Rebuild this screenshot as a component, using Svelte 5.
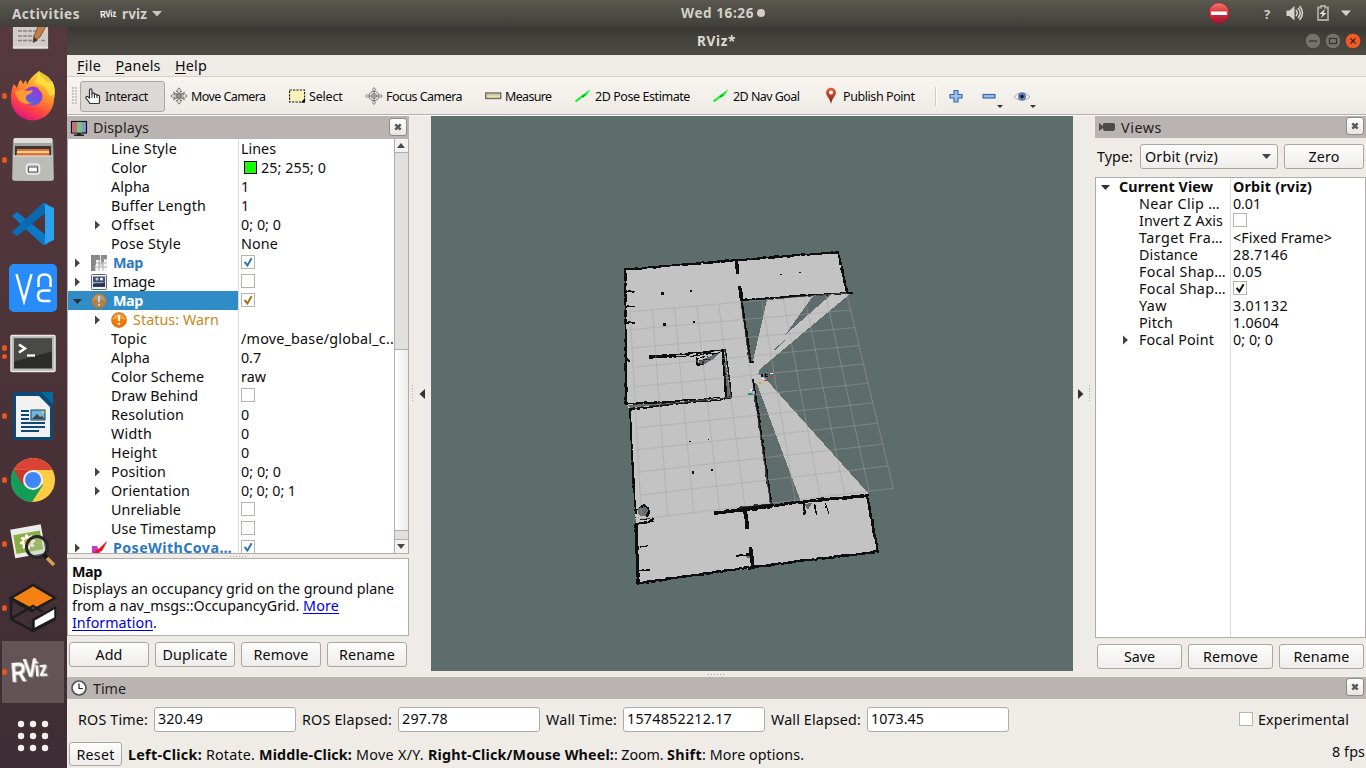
<script>
  // Adjusts tracking so that a label fills its measured column width.
  function fit(node, w) {
    if (!w) return;
    const natural = node.getBoundingClientRect().width;
    const n = [...node.textContent].length;
    node.style.letterSpacing = ((w - natural) / n).toFixed(3) + 'px';
  }

  const dock = [
    { id: 'edit', dots: 0 }, { id: 'firefox', dots: 1 }, { id: 'files', dots: 1 }, { id: 'code', dots: 0 },
    { id: 'vnc', dots: 0 }, { id: 'term', dots: 2 }, { id: 'writer', dots: 1 }, { id: 'chrome', dots: 1 },
    { id: 'viewer', dots: 1 }, { id: 'gazebo', dots: 1 }, { id: 'rviz', dots: 1 }, { id: 'apps', dots: 0 }
  ];

  const tools = [
    { id: 'hand', label: 'Interact', box: 85, w: 43, on: true },
    { id: 'move', label: 'Move Camera', box: 118, w: 74.5 },
    { id: 'select', label: 'Select', box: 77, w: 33.5 },
    { id: 'focus', label: 'Focus Camera', box: 119, w: 76 },
    { id: 'measure', label: 'Measure', box: 90, w: 46.5 },
    { id: 'arrow', label: '2D Pose Estimate', box: 138, w: 95 },
    { id: 'arrow', label: '2D Nav Goal', box: 110, w: 66.5 },
    { id: 'pin', label: 'Publish Point', box: 109, w: 71.5 }
  ];

  // k: label, w: label width, v: value, vw: value width, d: depth
  const rows = [
    { k: 'Line Style', w: 66, v: 'Lines', vw: 35, d: 2 },
    { k: 'Color', w: 36, v: '25; 255; 0', vw: 65, d: 2, swatch: true },
    { k: 'Alpha', w: 39, v: '1', d: 2 },
    { k: 'Buffer Length', w: 95, v: '1', d: 2 },
    { k: 'Offset', w: 44, v: '0; 0; 0', vw: 40, d: 2, tri: 'r' },
    { k: 'Pose Style', w: 70, v: 'None', vw: 37, d: 2 },
    { k: 'Map', w: 30, d: 1, tri: 'r', icon: 'map', style: 'blue', check: '#2a76bd' },
    { k: 'Image', w: 42, d: 1, tri: 'r', icon: 'image', check: 'none' },
    { k: 'Map', w: 30, d: 1, tri: 'd', icon: 'warn', style: 'sel', check: '#a8720a' },
    { k: 'Status: Warn', w: 86, d: 2, tri: 'r', icon: 'warn', style: 'warnrow' },
    { k: 'Topic', w: 36, v: '/move_base/global_c..', vw: 153, d: 2 },
    { k: 'Alpha', w: 39, v: '0.7', vw: 20, d: 2 },
    { k: 'Color Scheme', w: 93, v: 'raw', vw: 25, d: 2 },
    { k: 'Draw Behind', w: 87, d: 2, check: 'none' },
    { k: 'Resolution', w: 73, v: '0', d: 2 },
    { k: 'Width', w: 41, v: '0', d: 2 },
    { k: 'Height', w: 46, v: '0', d: 2 },
    { k: 'Position', w: 55, v: '0; 0; 0', vw: 40, d: 2, tri: 'r' },
    { k: 'Orientation', w: 79, v: '0; 0; 0; 1', vw: 55, d: 2, tri: 'r' },
    { k: 'Unreliable', w: 70, d: 2, check: 'none' },
    { k: 'Use Timestamp', w: 105, d: 2, check: 'none' },
    { k: 'PoseWithCova…', w: 119, d: 1, tri: 'r', icon: 'pose', style: 'blue', check: '#2a76bd' }
  ];

  const views = [
    { k: 'Current View', w: 94, v: 'Orbit (rviz)', vw: 79, top: true, tri: 'd' },
    { k: 'Near Clip …', w: 81, v: '0.01', vw: 28 },
    { k: 'Invert Z Axis', w: 84, check: 'none' },
    { k: 'Target Fra…', w: 84, v: '<Fixed Frame>', vw: 99 },
    { k: 'Distance', w: 59, v: '28.7146', vw: 55 },
    { k: 'Focal Shap…', w: 87, v: '0.05', vw: 29 },
    { k: 'Focal Shap…', w: 87, check: '#111' },
    { k: 'Yaw', w: 28, v: '3.01132', vw: 55 },
    { k: 'Pitch', w: 34, v: '1.0604', vw: 46 },
    { k: 'Focal Point', w: 75, v: '0; 0; 0', vw: 40, tri: 'r' }
  ];

  const times = [
    { k: 'ROS Time:', w: 70, v: '320.49', vw: 45 },
    { k: 'ROS Elapsed:', w: 90, v: '297.78', vw: 46 },
    { k: 'Wall Time:', w: 71, v: '1574852212.17', vw: 105 },
    { k: 'Wall Elapsed:', w: 90, v: '1073.45', vw: 53 }
  ];

  // Occupied cells: each wall is [thickness, x, y, x, y, ...]
  let seed = 7;
  const rnd = () => ((seed = (seed * 16807) % 2147483647) / 2147483647);
  const walls = [
    [1.8, 625, 269.5, 736, 260, 838, 252, 847, 292], [1.6, 851, 292.5, 741.7, 300.3], [1, 845, 293, 780, 297],
    [3, 739.5, 287, 741.7, 300.3], [2, 741.7, 300.3, 750, 361.7, 752.5, 361.7], [3, 736.5, 260, 737, 272],
    [1.8, 625, 269.5, 625.7, 323, 626, 404], [1.6, 626, 404, 680, 401], [1, 680, 400.5, 731.5, 397.3],
    [1.6, 629.5, 409.3, 655, 406, 700, 400.5], [1, 700, 400.5, 731, 397.5], [1, 700, 402, 730, 398.5],
    [1.6, 722.5, 351, 726, 397], [1.4, 725.5, 350, 731.5, 397], [2.6, 650, 357, 675, 356], [1.4, 675, 355, 725, 350], [1, 676, 357, 720, 353],
    [1.6, 630, 409, 632, 458, 635.5, 511], [2.6, 636, 525, 638, 583], [1.6, 636, 524, 653, 521], [1, 640, 519, 653, 519], [1, 653, 518, 653, 521],
    [2, 638, 583, 700, 574.5, 753, 567, 800, 561, 878, 551.5], [2, 866.7, 495, 878, 551.5], [1.6, 636, 523, 637.7, 583],
    [3, 715, 513, 771.5, 506], [2, 740, 508, 771.5, 504.5], [2, 771, 505.5, 800, 502.5, 867.7, 495.5], [1, 800, 501, 867, 494.5],
    [2, 753, 380, 771, 504], [3, 744.5, 509, 747.7, 527], [3, 750.7, 548.5, 752.5, 567], [1.6, 736, 555.3, 750, 554.7],
    [2, 803.5, 503, 804.5, 514], [1.4, 814.3, 504, 816.5, 514], [1, 825, 503, 828.7, 513],
    [1, 626, 291.5, 634, 291.5], [1, 626, 307, 634, 306.5], [1, 626, 323, 634, 322], [2, 626.5, 359, 629, 361],
    [1, 640, 547, 648, 546], [1, 639, 570.5, 649, 569.5],
    [1.6, 696.5, 358, 697.5, 365, 703, 365, 703, 362], [0.8, 697, 358, 707, 356], [0.8, 699, 361, 711, 359],
    [1.4, 640, 507, 644, 505.5, 648, 508, 649, 512, 647, 516], [1, 637, 509, 636, 513]
  ];
  const dots = [[662.7, 293, 3], [690.7, 291.3, 2], [664.3, 324.7, 2.5], [694, 322.3, 2], [781, 274.3, 1.5], [800, 272.3, 1.5],
    [690, 441.7, 1.5], [708.3, 439.3, 1], [693, 472.3, 2.5], [711.7, 470, 1.5], [788, 317, 0.8], [790, 314, 0.8], [635, 517, 1]];
  const cell = (x, y, s) => `M${x.toFixed(1)} ${y.toFixed(1)}h${s}v${s}h${-s}z`;
  let cells = '';
  for (const [t, ...p] of walls) {
    for (let i = 0; i + 3 < p.length; i += 2) {
      const [x0, y0, x1, y1] = p.slice(i, i + 4);
      const n = Math.ceil(Math.hypot(x1 - x0, y1 - y0) / 0.9);
      let j = 0;
      for (let q = 0; q <= n; q++) {
        if (q % 4 === 0) j = (rnd() - 0.5) * 1.1;
        const s = +(t + (rnd() < 0.12 ? 1 : 0)).toFixed(1);
        cells += cell(x0 + ((x1 - x0) * q) / n - s / 2 + j * 0.6, y0 + ((y1 - y0) * q) / n - s / 2 + j, s);
      }
    }
  }
  for (const [x, y, s] of dots) cells += cell(x - s / 2, y - s / 2, s);

  // Ground plane grid: ten by ten cells seen in perspective
  const A = [630, 311.7], B = [846.5, 293], C = [893.3, 488.3], D = [641.5, 519];
  const sx = A[0] - B[0] + C[0] - D[0], sy = A[1] - B[1] + C[1] - D[1];
  const dx1 = B[0] - C[0], dx2 = D[0] - C[0], dy1 = B[1] - C[1], dy2 = D[1] - C[1];
  const det = dx1 * dy2 - dx2 * dy1;
  const g = (sx * dy2 - dx2 * sy) / det, h = (dx1 * sy - sx * dy1) / det;
  const proj = (u, v) => {
    const z = g * u + h * v + 1;
    return [0, 1].map((i) => (((B[i] - A[i] + g * B[i]) * u + (D[i] - A[i] + h * D[i]) * v + A[i]) / z).toFixed(1)).join(' ');
  };
  let grid = '';
  for (let i = 0; i <= 10; i++) grid += `M${proj(i / 10, 0)}L${proj(i / 10, 1)}M${proj(0, i / 10)}L${proj(1, i / 10)}`;
</script>

{#snippet t(s, w)}<span class="t" use:fit={w}>{s}</span>{/snippet}

{#snippet tri(dir)}
  <svg class="tri" width="10" height="10" viewBox="0 0 10 10">
    {#if dir === 'r'}<path d="M2 .5v9l5-4.5z" fill="#454545" />{:else}<path d="M0 3h9L4.500 8z" fill="#303030" />{/if}
  </svg>
{/snippet}

{#snippet check(c)}
  <span class="check">{#if c !== 'none'}<svg width="12" height="12" viewBox="0 0 12 12"><path d="M2.6 5.8l2.8 3.6L9.6 2.2" fill="none" stroke={c} stroke-width="2" /></svg>{/if}</span>
{/snippet}

{#snippet close()}
  <span class="close"><svg width="10" height="10" viewBox="0 0 10 10"><path d="M2.3 2.3l5.4 5.4M7.7 2.3L2.3 7.7" stroke="#5a5a5a" stroke-width="2.5" /></svg></span>
{/snippet}

{#snippet rowIcon(id)}
  <svg width="16" height="16" viewBox="0 0 16 16">
    {#if id === 'map'}
      <path d="M0 0h16v16H0z" fill="#f4f4f4" /><path d="M0 0h9v5H5v5H4v6H0z" fill="#858585" /><path d="M10 0h6v4h-3v3h-3z" fill="#8b8b8b" /><path d="M8 7h4v4H8z" fill="#d5d5d5" />
      <path d="M0 4h16M0 8h16M0 12h16M4 0v16M8 0v16M12 0v16" stroke="#999" stroke-width=".7" />
    {:else if id === 'image'}
      <rect x=".5" y=".5" width="15" height="15" rx="1" fill="#f2f2f2" stroke="#666" /><rect x="2" y="2.500" width="12" height="10.500" fill="#3c4e7c" /><path d="M2 8h12v3H2z" fill="#8ba1c5" /><path d="M2 10c4-2 7 1 12-2v4.500H2z" fill="#283447" /><circle cx="10.500" cy="5" r="1.500" fill="#fff" /><circle cx="6" cy="5" r="1.500" fill="#c8cfb0" />
    {:else if id === 'warn'}
      <circle cx="8" cy="8" r="7.300" fill="#f57900" stroke="#dc6800" stroke-width="1" /><path d="M1.500 8a6.500 6.500 0 0 1 13 0c-4-2-8-2-13 0z" fill="#ffad55" opacity=".7" /><path d="M8 3v6" stroke="#fff" stroke-width="2.200" /><circle cx="8" cy="11.700" r="1.200" fill="#fff" />
    {:else}
      <path d="M1 6h5l3 6v4H1z" fill="#c73ac4" /><path d="M6 11L15.500 2 10.500 11z" fill="#f01010" stroke="#f01010" stroke-width=".8" /><path d="M1 16l7-6" stroke="#f01010" stroke-width="2.600" />
    {/if}
  </svg>
{/snippet}

{#snippet toolIcon(id)}
  <svg width="18" height="18" viewBox="0 0 18 18">
    {#if id === 'hand'}
      <path d="M5.500 11V3a1.200 1.200 0 0 1 2.400 0v5-1.500q1.300-1.200 2.500 0v1q1.300-1 2.500.2v.8q1.500-.8 2.600.5V15.500q0 1-1 1H6.500q-1 0-1.500-1.500L1.800 11Q1.800 9 3.500 9.500z" fill="#fff" stroke="#333" stroke-width="1.200" /><path d="M8 8v3M10.500 8v3M13 8.500V11" stroke="#333" />
    {:else if id === 'move'}
      <g transform="translate(9 9)" fill="#eee" stroke="#6d6d6d" stroke-width=".9">{#each [0, 90, 180, 270] as a}<path transform="rotate({a})" d="M-1 -2v-2.500h-1.700L0-8.200 2.700-4.500H1V-2z" />{/each}<rect x="-2" y="-2" width="4" height="4" fill="#999" /><path d="M-6-4l4 2M6-4L2-2M-6 4l4-2M6 4L2 2" /></g>
    {:else if id === 'select'}
      <rect x="1.600" y="3" width="15" height="12" fill="#fdf1bb" stroke="#111" stroke-width="1.100" stroke-dasharray="2.200 1.200" /><path d="M17 11v4.500h-4z" />
    {:else if id === 'focus'}
      <g fill="none" stroke="#777"><circle cx="9" cy="9" r="4.800" /><circle cx="9" cy="9" r="2.500" /><path d="M9 5v8M5 9h8" /></g><path d="M8 1h2v3H8zM8 14h2v3H8zM1 8h3v2H1zM14 8h3v2h-3z" fill="#fff" stroke="#777" stroke-width=".8" />
    {:else if id === 'measure'}
      <rect x="1.700" y="6" width="15" height="5.500" fill="#ebe3a4" stroke="#6d6d6d" stroke-width="1.400" /><path d="M4 6v2.500M6 6v2.500M8 6v2.500M10 6v2.500M12 6v2.500M14 6v2.500" stroke="#999" stroke-width=".8" />
    {:else if id === 'arrow'}
      <path d="M1.500 14.500L10 8" stroke="#0cf322" stroke-width="2.200" /><path d="M7 9L16.500 2 11.500 9.500z" fill="#0cf322" /><path d="M7.500 9.500l4-2.500-2 3.500z" fill="#0a9a18" />
    {:else}
      <path d="M9 .8a5 5 0 0 1 5 5c0 3.200-4 5.500-5 11.200C8 11.300 4 9 4 5.800a5 5 0 0 1 5-5z" fill="url(#pin)" /><circle cx="9" cy="5.500" r="2" fill="#fff" />
    {/if}
  </svg>
{/snippet}

{#snippet dockIcon(id)}
  <svg width="52" height="52" viewBox="-26 -26 52 52">
    {#if id === 'edit'}
      <g opacity=".85" transform="translate(0 1)"><rect x="-20.500" y="-20" width="36" height="36" rx="1.500" fill="#e8e5e2" stroke="#4d564d" /><path d="M-15-8H12M-15-2H3M-15 3H2M-15 7.500H5M8 7.500h4" stroke="#98938f" stroke-width="1.500" stroke-dasharray="4 1" /><path d="M-20 14.500h35" stroke="#fff" stroke-width="2" /><path d="M9-16l9 0L7 4 0 9l1-6z" fill="#d48b4c" stroke="#915b31" /><path d="M1 4l4 3-5 3z" fill="#3b3b3b" /></g>
    {:else if id === 'firefox'}
      <path d="M-16-8c1-4 2-7 4-8l2 4 3-4 1 5c2-6 7-10 12-14 0 5 5 7 9 12l4-2c3 6 4 12 2 18A21 21 0 0 1-22 3c0-7 1-12 3-15z" fill="url(#fox)" />
      <path d="M6-25c0 5-3 7-4 12l10 4 5 9 4-1c2-9-2-15-7-19z" fill="#ffe13c" opacity=".85" /><circle cx="0" cy="0" r="9.500" fill="url(#foxb)" /><path d="M-18-4c4-3 9-2 12-1l6-1c-1 4-5 4-7 6-1 4 2 7 6 7-6 2-14 1-17-11z" fill="#ff9a33" />
      <path d="M3-10q8 3 8 11-1-4-4-6z" fill="#ff9c1e" />
    {:else if id === 'files'}
      <path d="M-20-21h40l1 39q0 3-3 3h-36q-3 0-3-3z" fill="#a5a5a2" /><path d="M-19-22h38v5h-38z" fill="#deddda" /><path d="M-18-14h36V0h-36z" fill="#3a3837" /><path d="M-16-11h32l1 11h-34z" fill="#df702f" /><path d="M-16-8h32" stroke="#fff1c4" stroke-width="1.500" /><path d="M-20-4h40v24q-20 2-40 0z" fill="#bbbbb8" /><path d="M-20-4h40" stroke="#e6e6e4" /><rect x="-6.500" y="4" width="13" height="10" rx="3" fill="#c4c4c2" stroke="#ededec" stroke-width="1.500" /><rect x="-4.500" y="7" width="9" height="5" fill="#f8f8f8" stroke="#555" />
    {:else if id === 'code'}
      <path d="M-21-8l5-4L15 13v7l-5 1z" fill="#0a7ac6" /><path d="M-21 8l5 4L15-13v-7l-5-1z" fill="#0a68b0" /><path d="M10-21l11 5v32l-11 5q2-1 2-5v-32q0-4-2-5z" fill="#2ba1ef" /><path d="M-21 8l5 4L-4 3-9-2z" fill="#0b6db8" />
    {:else if id === 'vnc'}
      <rect x="-24" y="-24" width="48" height="48" rx="5" fill="#288dfa" /><path d="M-16.500-14L-9 13-1.500-14M5.500-1v-7q0-5.500 6-5.500t6 5.500v7M17.500 2.500H11q-6 0-6 5.200 0 5.300 6 5.300h6.500" fill="none" stroke="#fff" stroke-width="2.500" />
    {:else if id === 'term'}
      <g transform="translate(0 1.500)"><rect x="-22" y="-18" width="44" height="36" rx="1" fill="#b9b9b6" stroke="#e8e8e6" stroke-width="1.500" /><rect x="-19" y="-15" width="38" height="30" fill="#2c2c2b" /><path d="M-19-15h38v13l-38 10z" fill="#494947" /><path d="M-14-9l6 4-6 4" fill="none" stroke="#fff" stroke-width="2.500" /><path d="M-6 2H2" stroke="#fff" stroke-width="2.300" /></g>
    {:else if id === 'writer'}
      <path d="M-18-24H9l11 11v35q0 2-2 2h-36q-2 0-2-2v-44q0-2 2-2z" fill="#0c4975" /><path d="M-17-20H6l11 11v30h-34z" fill="#f1f1ef" /><path d="M8-24h12v12z" fill="#0369a3" /><path d="M-12-5h8M-12-1h8M-12 3h8M-12 7h24M-12 11h24M-12 15H6" stroke="#0c4975" stroke-width="2" /><rect x="-2" y="-6" width="14" height="10" fill="#71b5df" stroke="#0c4975" /><path d="M-1 3l5-5 3 3 2-1 3 3z" fill="#444" /><circle cx="10" cy="-4" r="1.500" fill="#e8c232" />
    {:else if id === 'chrome'}
      <circle r="22" fill="#fc4" /><path d="M0 0L-19.500-10.500A22 22 0 0 0-1 22L10 5z" fill="#129d58" /><path d="M-19.500-10.500A22 22 0 0 1 19.500-10H0z" fill="#da4437" /><path d="M-19.500-10.500L-10 6-9-5 0-10z" fill="#c8382e" /><circle r="10" fill="#f1f1f1" /><circle r="8" fill="#4285f4" />
    {:else if id === 'viewer'}
      <g transform="rotate(-10)"><rect x="-20" y="-18" width="31" height="29" fill="#ededeb" /><rect x="-18" y="-12" width="27" height="19" fill="#8bae42" /><g fill="#fff">{#each [0, 45, 90, 135] as a}<ellipse transform="translate(-5 -3) rotate({a})" rx="8" ry="2.500" />{/each}</g><circle cx="-5" cy="-3" r="3.500" fill="#e7bb27" /></g><circle cx="4" cy="3" r="10.500" fill="#b9c2a8" fill-opacity=".4" stroke="#252829" stroke-width="3" /><path d="M11 11l3 3" stroke="#151515" stroke-width="4" /><path d="M14 14l7 7" stroke="#d49e4a" stroke-width="3.500" />
    {:else if id === 'gazebo'}
      <path d="M-22-10L0-23l22 13L0 2z" fill="#f58113" stroke="#1d1d1d" stroke-width="2.500" /><path d="M-22-10v21L0 23 22 11V0L0 12v11M-22 11L0-2 10 4M-22-9L0 4" fill="none" stroke="#1d1d1d" stroke-width="2.500" /><path d="M1 12L22 0v10L1 21z" fill="#fff" stroke="#1d1d1d" stroke-width="1.500" />
    {:else if id === 'rviz'}
      <text class="logo" transform="translate(-21.500 10) rotate(-4) scale(.78 1)" font-size="27">R<tspan dx="-3" dy="-4" font-size="26">V</tspan><tspan dx="-3" dy="0" font-size="21">iz</tspan></text>
    {:else}
      {#each [-12, 0, 12] as y}{#each [-12, 0, 12] as x}<circle cx={x} cy={y} r="3.200" fill="#f3f1f0" />{/each}{/each}
    {/if}
  </svg>
{/snippet}

<div class="screen">
  <svg class="defs" width="0" height="0"><defs>
    <linearGradient id="pin" x2="0" y2="1"><stop stop-color="#ee5b38" /><stop offset=".6" stop-color="#a83b24" /><stop offset="1" stop-color="#4d2415" /></linearGradient>
    <linearGradient id="fox" x1=".8" x2=".3" y2="1"><stop stop-color="#ffe23f" /><stop offset=".4" stop-color="#ff9a2b" /><stop offset=".7" stop-color="#ff4a3f" /><stop offset="1" stop-color="#e3127f" /></linearGradient>
    <linearGradient id="foxb" x1=".8" x2=".3" y2="1"><stop stop-color="#a32fd8" /><stop offset="1" stop-color="#4b6be0" /></linearGradient>
    <linearGradient id="red" x2="0" y2="1"><stop stop-color="#f07a70" /><stop offset=".5" stop-color="#d8303a" /><stop offset="1" stop-color="#a01030" /></linearGradient>
  </defs></svg>

  <header class="topbar">
    <div class="tl">{@render t('Activities', 68)}
      <svg class="mini" width="17" height="16" viewBox="0 0 17 16"><text class="logo" transform="translate(.5 12) rotate(-5) scale(.75 1)" font-size="10">RViz</text></svg>
      {@render t('rviz', 25)}<svg class="ta" width="10" height="6"><path d="M0 0h10L5 5.500z" fill="#c9c7c1" /></svg></div>
    <div class="clock">{@render t('Wed 16:26', 73)}<i></i></div>
    <div class="tr">
      <svg width="148" height="27" viewBox="1206 0 148 27">
        <circle cx="1219" cy="13" r="10.300" fill="url(#red)" stroke="#8f2028" stroke-width=".7" /><rect x="1211" y="11.500" width="16" height="3.500" fill="#fff" />
        <text x="1264" y="19" font-size="13" font-weight="700" font-family="Noto Sans" fill="#cfcdc7">?</text>
        <path d="M1286.500 10.500h3l5-4.500v14.500l-5-4.500h-3z" fill="#d5d3cd" /><path d="M1296 10q2.500 3 0 6M1298 8q4.500 5 0 10M1299.500 6q6 7 0 14" fill="none" stroke="#d5d3cd" stroke-width="1.500" />
        <path d="M1318 7.500h3v-1.500h4v1.500h3v12.500h-10z" fill="none" stroke="#aaa8a1" stroke-width="1.800" /><path d="M1325 9l-5.500 5h3l-1.500 4 5.500-5h-3z" fill="#e6e4df" />
        <path d="M1341 10.500h10l-5 5.500z" fill="#d5d3cd" />
      </svg>
    </div>
  </header>

  <div class="body">
    <nav class="dock">
      {#each dock as d}
        <div class="app" class:active={d.id === 'rviz'}>
          <span class="run">{#each Array(d.dots) as _}<i></i>{/each}</span>
          {@render dockIcon(d.id)}
        </div>
      {/each}
    </nav>

    <div class="window">
      <div class="title">
        <b>{@render t('RViz*', 39)}</b>
        <svg width="60" height="20" viewBox="1304 31 60 20">
          <circle cx="1313" cy="41" r="7.800" fill="#73726b" stroke="#2e2d2a" stroke-width=".6" /><path d="M1309 41h8" stroke="#33322e" stroke-width="1.200" />
          <circle cx="1333" cy="41" r="7.800" fill="#73726b" stroke="#2e2d2a" stroke-width=".6" /><rect x="1329.500" y="38.500" width="7" height="5" fill="none" stroke="#33322e" stroke-width="1.200" />
          <circle cx="1353" cy="41" r="7.800" fill="#ec5a29" stroke="#2e2d2a" stroke-width=".6" /><path d="M1350.500 38.500l5 5M1355.500 38.500l-5 5" stroke="#4b1c0c" stroke-width="1.200" />
        </svg>
      </div>
      <div class="menu">{#each [['File', 24], ['Panels', 45], ['Help', 32]] as [m, w]}<span class="t" use:fit={w}><u>{m[0]}</u>{m.slice(1)}</span>{/each}</div>
      <div class="toolbar">
        <span class="grip"></span>
        {#each tools as b}
          <div class="tool" class:on={b.on} style:width="{b.box}px">{@render toolIcon(b.id)}{@render t(b.label, b.w)}</div>
        {/each}
        <span class="sep"></span>
        <svg class="extra" width="92" height="36" viewBox="946 78 92 36">
          <path d="M954 90.500h4v4h4v3.500h-4v4h-4v-4h-4v-3.500h4z" fill="#9fc0e8" stroke="#3a6aa9" stroke-width="1.200" />
          <rect x="983" y="94.500" width="12" height="3.500" fill="#9fc0e8" stroke="#3a6aa9" stroke-width="1.200" />
          <path d="M997 105h6l-3 3zM1030 105h6l-3 3z" fill="#333" />
          <path d="M1014 97q8-9 16 0-8 7-16 0z" fill="#f5f5f5" stroke="#aaa" /><circle cx="1022" cy="96.500" r="4" fill="#5f79b5" /><circle cx="1022" cy="96.500" r="1.700" fill="#101828" />
        </svg>
      </div>

      <div class="main">
        <section class="displays">
          <div class="head">
            <svg width="18" height="18" viewBox="0 0 18 18"><rect x="1.500" y="2.500" width="15" height="11.500" fill="#8f8fd4" stroke="#111" stroke-width="1.200" /><path d="M2 3h5v10.500H2z" fill="#c07080" /><path d="M7 3h5v10.500H7z" fill="#74c47d" /><path d="M7 14h4v1.500h3V17H4v-1.500h3z" fill="#222" /></svg>
            {@render t('Displays', 56)}{@render close()}
          </div>
          <div class="tree">
            <div class="rows">
              {#each rows as r}
                <div class="row {r.style ?? ''}">
                  <div class="key d{r.d}" class:ic={r.icon}>
                    <span class="tw">{#if r.tri}{@render tri(r.tri)}{/if}</span>
                    {#if r.icon}<span class="ri">{@render rowIcon(r.icon)}</span>{/if}{@render t(r.k, r.w)}
                  </div>
                  <div class="val">{#if r.check}{@render check(r.check)}{/if}{#if r.swatch}<span class="swatch"></span>{/if}{#if r.v}{@render t(r.v, r.vw)}{/if}</div>
                </div>
              {/each}
            </div>
            <div class="scroll">
              <span class="sb"><svg width="9" height="5"><path d="M0 5h8L4 0z" fill="#4a4a4a" /></svg></span>
              <span class="thumb"></span>
              <span class="sb dn"><svg width="9" height="5"><path d="M0 0h8L4 5z" fill="#4a4a4a" /></svg></span>
            </div>
          </div>
          <div class="hsplit"><span></span></div>
          <div class="desc"><b>{@render t('Map', 30)}</b><br />{@render t('Displays an occupancy grid on the ground plane', 322)}<br />{@render t('from a nav_msgs::OccupancyGrid. ', 231)}<a href="#more">{@render t('More', 36)}</a><br /><a href="#more">{@render t('Information', 81)}</a>.</div>
          <div class="btns left">{#each [['Add', 27], ['Duplicate', 65], ['Remove', 55], ['Rename', 56]] as [b, w]}<button>{@render t(b, w)}</button>{/each}</div>
        </section>

        <div class="vsplit"><span class="vd"></span><svg width="6" height="10"><path d="M6 0v10L0.500 5z" fill="#333" /></svg></div>

        <svg class="view" width="642" height="555" viewBox="431 116 642 555">
          <g shape-rendering="crispEdges">
            <path fill="#c3c3c3" d="M625 270L736 260 838 252 847 293 742 301 751 362 753 361 767 300 813 296 785 335 833 293 851 293 760 369 758 374 763 376 868 493 866 497 878 551 752 568 638 583 636 525 635 512 630 410 626 404z" />
            <path fill="#5f6e6c" d="M754 383L757 384 801 502 772 505zM724 351L731 397 727 398 723 354zM627 405L700 400.500 630 408zM804 504L812 503 808 510zM699 361L711 356 721 351 712 360 703 365 698 365zM773 350L785 340 783 342 776 350z" />
            <circle cx="643" cy="511" r="5.500" fill="#5f6e6c" /><path fill="#5f6e6c" d="M746 556h5v2h-4z" />
            <path d={cells} fill="#0e0e0e" />
          </g>
          <path d={grid} fill="none" stroke="#a0a0a4" stroke-opacity=".48" stroke-width="1" />
          <g shape-rendering="crispEdges">
            <path fill="#111" d="M761 374h2v3h-2zM765 373h3v4h-3z" /><path fill="#1fa04c" d="M766 371h2v3h-2zM769 374h2v2h-2zM748 393h5v2h-5z" /><path fill="#d33" d="M764 380h3v1h-3zM769 377h4v1h-4zM771 371h1v2h-1zM766 375h2v1h-2z" /><path fill="#3b44d8" d="M767 370h1v2h-1zM764 374h1v3h-1zM769 373h1v2h-1zM752 390h1v3h-1z" /><path fill="#eee" d="M770 373h3v1h-3zM762 378h2v1h-2zM750 389h2v2h-2z" /><path fill="#b69ad0" d="M752 391h3v3h-3z" /><path fill="#c7a83a" d="M759 382h2v2h-2zM758 387h1v1h-1z" />
          </g>
        </svg>

        <div class="vsplit r"><svg width="6" height="10"><path d="M0 0v10L5.500 5z" fill="#333" /></svg><span class="vd"></span></div>

        <section class="views">
          <div class="head"><svg width="18" height="18" viewBox="0 0 18 18"><path d="M1 5l4 3V6q0-1 2-1h8q2 0 2 2v4q0 2-2 2H7q-2 0-2-2v-1l-4 3z" fill="#4c4c4c" /></svg>{@render t('Views', 41)}{@render close()}</div>
          <div class="type">{@render t('Type:', 36)}<span class="combo">{@render t('Orbit (rviz)', 73)}<svg width="9" height="5"><path d="M0 0h9L4.500 5z" fill="#444" /></svg></span><button>{@render t('Zero', 31)}</button></div>
          <div class="vtree">
            {#each views as r}
              <div class="vrow" class:top={r.top}>
                <div class="vk"><span class="tw">{#if r.tri}{@render tri(r.tri)}{/if}</span>{@render t(r.k, r.w)}</div>
                <div class="val">{#if r.check}{@render check(r.check)}{/if}{#if r.v}{@render t(r.v, r.vw)}{/if}</div>
              </div>
            {/each}
            <div class="vrow fill"><div class="vk"></div><div class="val"></div></div>
          </div>
          <div class="btns right">{#each [['Save', 31], ['Remove', 55], ['Rename', 56]] as [b, w]}<button>{@render t(b, w)}</button>{/each}</div>
        </section>
      </div>

      <div class="bsplit"><span></span></div>
      <div class="head time"><svg width="18" height="18" viewBox="0 0 18 18"><circle cx="9" cy="9" r="7" fill="#fff" stroke="#555" stroke-width="1.700" /><path d="M9 4.500V9.500h3.800" fill="none" stroke="#222" stroke-width="1.200" /></svg>{@render t('Time', 33)}{@render close()}</div>
      <div class="fields">
        {#each times as f}<label>{@render t(f.k, f.w)}<span class="input">{@render t(f.v, f.vw)}</span></label>{/each}
        <span class="exp">{@render check('none')}{@render t('Experimental', 91)}</span>
      </div>
      <div class="status">
        <button>{@render t('Reset', 38)}</button>
        <div class="hint"><b>{@render t('Left-Click:', 74)}</b>{@render t(' Rotate. ', 57)}<b>{@render t('Middle-Click:', 93)}</b>{@render t(' Move X/Y. ', 76)}<b>{@render t('Right-Click/Mouse Wheel:', 186)}</b>{@render t(': Zoom. ', 53)}<b>{@render t('Shift', 35)}</b>{@render t(': More options.', 102)}</div>
        <span class="fps">{@render t('8 fps', 33)}</span>
      </div>
    </div>
  </div>
</div>

<style>
  :global(body) { margin: 0; overflow: hidden; }
  .screen { width: 1366px; height: 768px; display: flex; flex-direction: column; font: 14.3px/19px "Noto Sans", "Open Sans", sans-serif; color: #0c0c0c; background: #efebe7; overflow: hidden; }
  .screen * { box-sizing: border-box; }
  svg { display: block; flex: none; }
  .defs { position: absolute; }
  .t { display: inline-block; white-space: pre; flex: none; }
  .logo { font-family: "Liberation Sans", sans-serif; font-weight: 700; fill: #fff; filter: drop-shadow(1px 1px 0 #aaa5a3); }
  .topbar .logo { filter: none; }
  .topbar { height: 27px; flex: none; display: grid; grid-template-columns: 681px 1fr 160px; background: linear-gradient(#5a584f, #403f3a); color: #d3d0ca; font-weight: 700; font-size: 13.5px; line-height: 26px; }
  .tl { display: flex; align-items: center; padding-left: 12px; }
  .mini { margin: 0 5px 0 20px; }
  .ta { margin-left: 5px; }
  .clock { display: flex; align-items: center; height: 26px; gap: 3px; }
  .clock i { width: 8px; height: 8px; border-radius: 50%; background: #d0cec8; }
  .body { flex: 1; display: flex; min-height: 0; }
  .dock { width: 67px; flex: none; overflow: hidden; background: linear-gradient(#55393f, #4b3338 45%, #3e2d34); }
  .app { height: 64px; display: flex; align-items: center; }
  .app:first-child { margin-top: -27px; clip-path: inset(27px 0 0 0); }
  .app.active { background: linear-gradient(#645457, #625357) no-repeat 2px 1px / 62px 62px; }
  .run { width: 7px; display: flex; flex-direction: column; gap: 3px; align-items: flex-end; padding-left: 2px; }
  .run i { width: 5.500px; height: 5.500px; border-radius: 50%; background: #e95420; }
  .window { flex: 1; min-width: 0; display: flex; flex-direction: column; }
  .title { height: 28px; flex: none; display: grid; grid-template-columns: 1fr 62px; background: linear-gradient(#3a3935, #4d4c45); color: #dfdbd2; align-items: center; font-size: 13.500px; }
  .title b { padding-left: 630px; }
  .menu { height: 22px; flex: none; display: flex; gap: 14.500px; padding-left: 10px; line-height: 21px; border-bottom: 1px solid #d5d0ca; }
  u { text-underline-offset: 2px; }
  .toolbar { height: 39px; flex: none; display: flex; align-items: center; background: linear-gradient(#f8f5f1, #eeebe6); border-bottom: 1px solid #f8f7f5; box-shadow: inset 0 -1px #b6b0ab; font-size: 12.500px; }
  .grip { width: 5px; height: 18px; margin: 0 3px 0 5px; background: radial-gradient(circle at 1px 1px, #bbb6b0 .6px, transparent 1px) 0 0 / 3px 3px; }
  .tool { height: 31px; display: flex; align-items: center; gap: 3px; padding: 0 0 0 5px; border: 0; }
  .tool.on { background: #dcd8d5; border: 1px solid #aba6a2; border-radius: 3px; padding-left: 3px; }
  .sep { width: 2px; height: 19px; background: #d1ccc6; border-right: 1px solid #fff; margin: 0 9px; }
  .main { height: 555px; flex: none; display: flex; }
  .displays { width: 342px; display: flex; flex-direction: column; }
  .head { height: 22px; flex: none; background: #b9b4b1; display: flex; align-items: center; gap: 5px; padding: 0 2px 0 3px; line-height: 23px; color: #222; }
  .displays .head { height: 23px; }
  .head .close { position: relative; top: -1px; }
  .close { margin-left: auto; width: 18px; height: 18px; background: linear-gradient(#fff, #e8e6e4); border: 1px solid #8f8b87; border-radius: 3px; display: grid; place-items: center; }
  .tree { height: 415px; flex: none; display: flex; background: #fff; border: 1px solid #b2adaa; border-top: 0; overflow: hidden; }
  .rows { flex: 1; overflow: hidden; }
  .row { height: 19px; display: grid; grid-template-columns: 171px 1fr; }
  .key { display: flex; align-items: center; border-right: 1px solid #dcdcdc; }
  .tw { width: 18px; height: 10px; flex: none; }
  .d2 { padding-left: 25px; }
  .d1 { padding-left: 5px; }
  .ri { width: 22px; }
  .val { display: flex; align-items: center; padding-left: 2px; overflow: hidden; white-space: nowrap; }
  .blue .key { color: #2a78c4; font-weight: 700; }
  .sel .key { background: #308cc6; color: #fff; font-weight: 700; }
  .sel .ri { opacity: .65; }
  .warnrow .key { color: #cb8716; }
  .check { width: 14px; height: 14px; flex: none; background: #fff; border: 1px solid #b7b3b0; margin-top: -1px; }
  .swatch { width: 13px; height: 13px; background: #19ff00; border: 1px solid #000; margin: 0 4px 0 3px; }
  .scroll { width: 14px; border-left: 1px solid #b2adaa; background: #e2e0de; display: flex; flex-direction: column; }
  .sb { height: 14px; display: grid; place-items: center; background: #f4f3f2; border-bottom: 1px solid #b2adaa; }
  .sb.dn { margin-top: auto; border: 0; border-top: 1px solid #b2adaa; }
  .thumb { height: 182px; margin-top: 196px; background: linear-gradient(90deg, #fff, #ecebea); border: solid #b2adaa; border-width: 1px 0; }
  .hsplit { height: 4px; flex: none; display: grid; place-items: center; }
  .hsplit span, .bsplit span { width: 17px; height: 1px; background: repeating-linear-gradient(90deg, #aaa 0 1px, transparent 1px 3px); }
  .desc { height: 78px; flex: none; background: #fff; border: 1px solid #b2adaa; padding: 4px 4px; line-height: 17px; }
  .desc a { color: #0000e8; }
  .desc a .t, .desc a > :global(.t) { text-decoration: underline; text-underline-offset: 2px; }
  .btns { display: flex; gap: 6px; }
  .left { padding: 6px 2px 0; }
  button { flex: 1; height: 25px; padding: 0; font: inherit; color: inherit; border: 1px solid #aaa6a2; border-radius: 3px; background: linear-gradient(#fdfdfc, #efedeb); display: flex; align-items: center; justify-content: center; }
  .vsplit { width: 22px; flex: none; display: flex; align-items: center; gap: 6px; padding-left: 3px; }
  .vsplit.r { padding-left: 5px; gap: 5px; }
  .vd { width: 1px; height: 17px; background: repeating-linear-gradient(#aaa 0 1px, transparent 1px 3px); }
  .view { background: #5d6d6b; }
  .views { flex: 1; display: flex; flex-direction: column; }
  .type { display: flex; align-items: center; padding: 6px 2px 8px; height: 39px; }
  .type > :global(.t) { margin-right: 7px; }
  .type button { margin-left: 6px; flex: 0 0 80px; }
  .combo { width: 138px; height: 25px; display: flex; align-items: center; justify-content: space-between; padding: 0 6px 0 4px; border: 1px solid #aaa6a2; border-radius: 3px; background: linear-gradient(#fdfdfc, #efedeb); }
  .vtree { height: 461px; flex: none; background: #fff; border: 1px solid #b2adaa; display: flex; flex-direction: column; }
  .vrow { display: grid; grid-template-columns: 135px 1fr; height: 17px; line-height: 17px; }
  .vrow.fill { flex: 1; }
  .vk { display: flex; align-items: center; padding-left: 25px; border-right: 1px solid #dcdcdc; }
  .vrow.top { font-weight: 700; }
  .vrow.top .vk { padding-left: 5px; }
  .right { padding: 6px 2px 0; }
  .bsplit { height: 6px; flex: none; display: grid; place-items: center; }
  .fields { display: flex; height: 41px; flex: none; align-items: center; gap: 6px; padding: 0 17px 0 11px; }
  label { display: flex; align-items: center; gap: 6px; }
  .input { width: 142px; height: 25px; background: #fff; border: 1px solid #b0aba7; border-radius: 3px; padding: 1px 3px; }
  .exp { margin-left: auto; display: flex; align-items: center; gap: 5px; }
  .status { flex: 1; display: flex; align-items: center; padding: 0 1px 0 2px; }
  .status button { flex: 0 0 53px; height: 24px; }
  .hint { margin-left: 6px; white-space: pre; }
  .fps { margin-left: auto; margin-top: -6px; }
</style>
